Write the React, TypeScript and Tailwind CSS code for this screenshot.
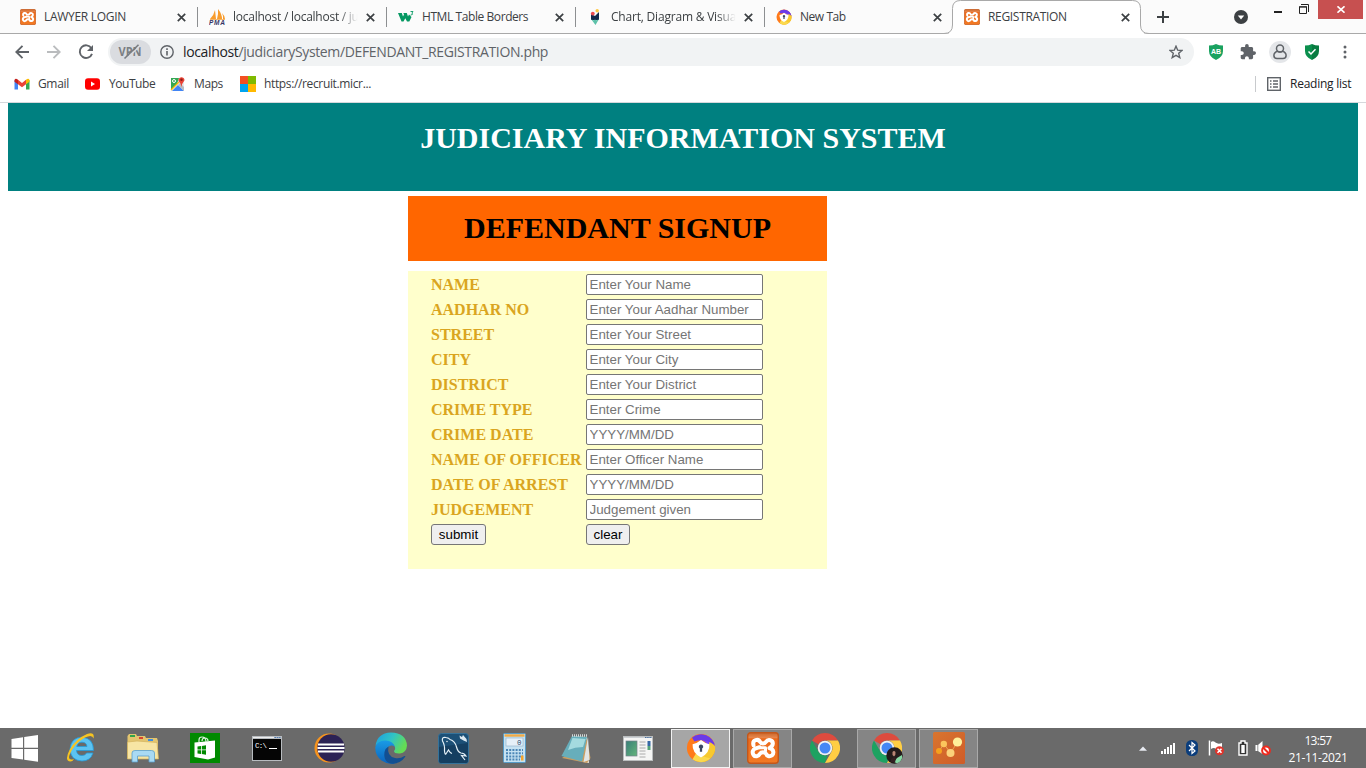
import React from "react";

const ui = "font-['Open_Sans','Noto_Sans',sans-serif]";

function XamppIcon({ size }: { size: number }) {
  return (
    <svg width={size} height={size} viewBox="0 0 32 32" className="shrink-0">
      <defs>
        <linearGradient id="xg" x1="0" y1="0" x2="0" y2="1">
          <stop offset="0" stopColor="#c9682c" />
          <stop offset="0.16" stopColor="#e8854a" />
          <stop offset="0.2" stopColor="#ec6a1c" />
          <stop offset="1" stopColor="#f27a24" />
        </linearGradient>
      </defs>
      <rect x="0.7" y="0.7" width="30.6" height="30.6" rx="3" fill="url(#xg)" stroke="#c4571a" strokeWidth="1.4" />
      <g fill="none" stroke="#fff" strokeWidth="4" strokeLinecap="round" strokeLinejoin="round">
        <path d="M6.500 13.200C5 7.200 11.500 6.800 13 9.800C14.200 12 17.800 12 19 9.800C21 6.800 26.200 8 25.800 11.800C25.600 14 24.500 15 22.500 16C27.200 17.500 27 21.500 25 23.400C22.500 25 19.700 24 19 21.700C17.800 19.800 14.200 19.800 13 21.700C11.500 24.800 8 25 6.600 23C4.800 20.400 5.600 17.400 8.800 16.400L12.500 15.200" />
        <path d="M12.500 15.700H18.500V19" strokeWidth="3" />
      </g>
    </svg>
  );
}

function SecureIcon({ size }: { size: number }) {
  return (
    <svg width={size} height={size} viewBox="0 0 32 32" className="shrink-0">
      <circle cx="16" cy="16" r="15" fill="#ff7a1a" />
      <path d="M6.500 5A15 15 0 0 1 30.800 14L27 19C25 11 17 6 6.500 5Z" fill="#7b46f3" />
      <path d="M30.800 13A15 15 0 0 1 7 28C17 27 24 22 25 9C28 10 30 11 30.800 13Z" fill="#f7c92e" />
      <path d="M7 28A15 15 0 0 0 26 27C21 26 15 24 11 21Z" fill="#fbd94d" />
      <path d="M6.500 5A15 15 0 0 1 30.800 14C27 9 18 6 9 9Z" fill="#6a3be8" />
      <path d="M7 12Q12 11 16 7.500Q20 11 25 12Q25.500 21.500 16 26Q6.500 21.500 7 12Z" fill="#fff" />
      <path d="M16 12.200a2.300 2.300 0 0 1 1.200 4.300V20h-2.400v-3.500A2.300 2.300 0 0 1 16 12.200Z" fill="#3b4762" />
    </svg>
  );
}

function ChromeIcon({ size = 30 }: { size?: number }) {
  return (
    <svg width={size} height={size} viewBox="0 0 48 48" className="shrink-0">
      <path d="M24 0A24 24 0 0 1 44.800 12H24A12 12 0 0 0 13.600 18L3.200 12A24 24 0 0 1 24 0Z" fill="#dd4b3e" />
      <path d="M3.200 12L13.600 30A12 12 0 0 0 28 35.300L24 48A24 24 0 0 1 3.200 12Z" fill="#1da261" />
      <path d="M44.800 12A24 24 0 0 1 24 48L34.400 30A12 12 0 0 0 24 12Z" fill="#ffce44" />
      <circle cx="24" cy="24" r="11.600" fill="#f1f1f1" />
      <circle cx="24" cy="24" r="8.800" fill="#4587f4" />
    </svg>
  );
}

function PmaIcon() {
  return (
    <svg width="18" height="17" viewBox="0 0 18 17" className="-mr-[2px] shrink-0">
      <path d="M6 1L7 10H1Q5 6 6 1ZM9 0Q13 5 13 10H8Q9.500 5 9 0ZM13 4Q16 7 16 10H14Q14.500 7 13 4Z" fill="#f89c2c" />
      <path d="M1 10.500H16" stroke="#f5b566" />
      <text x="0" y="16.300" fontSize="6.500" fontWeight="bold" fontStyle="italic" fontFamily="Liberation Sans" fill="#353564" textLength="16">PMA</text>
    </svg>
  );
}

function W3Icon() {
  return (
    <svg width="16" height="16" viewBox="0 0 16 16" className="shrink-0">
      <path d="M0 4H3.800L5 7.500L6 5.500L5.300 4H8.800L10 7.500L11 5.500L13.500 8L11.300 12.500H9L7.300 9.300L5.500 12.500H3.500Z" fill="#059862" />
      <path d="M12.500 2.500h2.500l-1 1.500q1.800 1.600-1.500 2.200" fill="none" stroke="#059862" strokeWidth="0.900" />
    </svg>
  );
}

function ChartIcon() {
  return (
    <svg width="16" height="16" viewBox="0 0 16 16" className="shrink-0">
      <path d="M4 5L8 7L12 3V11H4Z" fill="#13294b" />
      <path d="M4 10Q6 12 8 10.500Q10 12 12 10L8.500 16Z" fill="#5dc1a9" />
      <circle cx="10.200" cy="1.800" r="1.700" fill="#ffc845" />
      <circle cx="5.800" cy="4.600" r="1.900" fill="#ee4a4f" />
    </svg>
  );
}

function CloseIcon() {
  return (
    <svg width="9" height="9" viewBox="0 0 9 9" className="shrink-0">
      <path d="M0.800 0.800L8.200 8.200M8.200 0.800L0.800 8.200" stroke="#3c4043" strokeWidth="1.700" />
    </svg>
  );
}

type TabProps = { icon: React.ReactNode; title: string; tracking: string; last?: boolean; fade?: boolean };

function Tab({ icon, title, tracking, last, fade }: TabProps) {
  return (
    <div className="flex h-[34px] w-[189px] shrink-0 items-center pl-[11px]">
      {icon}
      <span
        className={`ml-2 w-[126px] text-[12px] leading-4 whitespace-nowrap text-[#3c4043] ${tracking} ${
          fade ? "[mask-image:linear-gradient(to_right,black_84%,transparent_99%)]" : ""
        }`}
      >
        {title}
      </span>
      <div className="ml-[7px] flex h-full flex-1 items-center justify-between">
        <CloseIcon />
        {!last && <i className="h-5 w-px bg-[#8d8f91]" />}
      </div>
    </div>
  );
}

function TabStrip() {
  return (
    <div className="flex h-[34px] items-stretch border-b border-[#a9a9a9] bg-[#fbfbfb]">
      <div className="flex pl-[9px]">
        <Tab icon={<XamppIcon size={16} />} title="LAWYER LOGIN" tracking="tracking-[-0.3px]" />
        <Tab icon={<PmaIcon />} title="localhost / localhost / ju" tracking="tracking-[-0.25px]" fade />
        <Tab icon={<W3Icon />} title="HTML Table Borders" tracking="tracking-[-0.42px]" />
        <Tab icon={<ChartIcon />} title="Chart, Diagram & Visua" tracking="tracking-[-0.2px]" fade />
        <Tab icon={<SecureIcon size={16} />} title="New Tab" tracking="tracking-[-0.45px]" last />
      </div>
      <div className="relative flex h-[34px] w-[188px] items-center">
        <svg className="absolute top-0 -left-[11px]" width="207" height="34" viewBox="0 0 207 34">
          <path
            d="M0 33.500H1Q9.500 33.500 9.500 25V8.500Q9.500 0.500 17.500 0.500H189.500Q197.500 0.500 197.500 8.500V25Q197.500 33.500 206 33.500H207"
            fill="#fff"
            stroke="#a9a9a9"
          />
          <path d="M6 33.500H201" stroke="#fff" strokeWidth="1.200" />
        </svg>
        <div className="relative flex w-full items-center pl-[10px]">
          <XamppIcon size={16} />
          <span className="ml-2 w-[126px] text-[12px] leading-4 tracking-[-0.32px] text-[#3c4043]">REGISTRATION</span>
          <div className="ml-[7px]">
            <CloseIcon />
          </div>
        </div>
      </div>
      <div className="flex flex-1 items-center justify-between pl-[15px]">
        <svg width="12" height="12" viewBox="0 0 12 12">
          <path d="M6 0V12M0 6H12" stroke="#3c4043" strokeWidth="2" />
        </svg>
        <div className="flex h-full items-start">
          <svg width="14" height="14" viewBox="0 0 14 14" className="mt-[10px] mr-[26px]">
            <circle cx="7" cy="7" r="7" fill="#3c4043" />
            <path d="M3.800 5.500H10.200L7 9.500Z" fill="#fff" />
          </svg>
          <i className="mt-[11px] mr-[17px] h-[2px] w-2 bg-[#222]" />
          <svg width="10" height="10" viewBox="0 0 10 10" className="mt-1 mr-[9px]">
            <path d="M0.500 3H7.500V9.500H0.500ZM0 2.800H8M2 0.500H9.500V8" fill="none" stroke="#222" />
          </svg>
          <div className="mr-[3px] flex h-[19px] w-[45px] items-center justify-center bg-[#c75050]">
            <svg width="8" height="7" viewBox="0 0 8 7">
              <path d="M0.500 0.300L7.500 6.700M7.500 0.300L0.500 6.700" stroke="#fff" strokeWidth="1.600" />
            </svg>
          </div>
        </div>
      </div>
    </div>
  );
}

function Toolbar() {
  return (
    <div className="flex h-[36px] items-center bg-white pl-[15px]">
      <svg width="14" height="14" viewBox="0 0 14 14">
        <path d="M14 7H1.500M7.500 0.800L1.300 7L7.500 13.200" fill="none" stroke="#5f6368" strokeWidth="1.900" />
      </svg>
      <svg width="14" height="14" viewBox="0 0 14 14" className="ml-[18px]">
        <path d="M0 7H12.500M6.500 0.800L12.700 7L6.500 13.200" fill="none" stroke="#babcbe" strokeWidth="1.900" />
      </svg>
      <svg width="16" height="16" viewBox="0 0 16 16" className="ml-[17px]">
        <path d="M13.400 4.200A6.300 6.300 0 1 0 14 9.800" fill="none" stroke="#5f6368" strokeWidth="1.900" />
        <path d="M15 1V7H9Z" fill="#5f6368" />
      </svg>
      <div className="ml-[14px] flex h-7 w-[1086px] items-center rounded-full bg-[#f1f3f4] pl-[2px]">
        <div className="flex h-6 w-[41px] items-center justify-center rounded-full bg-[#dadce0]">
          <svg width="25" height="16" viewBox="0 0 25 16">
            <text x="0.500" y="12" fontSize="12" fontWeight="bold" fontFamily="Open Sans" fill="#7b7f84" textLength="23" lengthAdjust="spacingAndGlyphs">VPN</text>
            <path d="M7.500 16L21.500 2.300" stroke="#dadce0" strokeWidth="1.600" />
            <path d="M6.500 14.500L20.500 0.800" stroke="#777b80" strokeWidth="1.600" />
          </svg>
        </div>
        <svg width="14" height="14" viewBox="0 0 14 14" className="ml-[9px]">
          <circle cx="7" cy="7" r="6.200" fill="none" stroke="#5f6368" strokeWidth="1.400" />
          <path d="M7 6V10.500M7 3.300V4.900" stroke="#5f6368" strokeWidth="1.600" />
        </svg>
        <span className="ml-[9px] text-[14px] leading-5 tracking-[-0.36px] whitespace-nowrap text-[#5f6368]">
          <b className="font-normal text-[#202124]">localhost</b>/judiciarySystem/DEFENDANT_REGISTRATION.php
        </span>
        <svg width="14" height="14" viewBox="0 0 14 14" className="mr-[11px] ml-auto">
          <path d="M7 1.200L8.700 5.200L13 5.500L9.700 8.300L10.800 12.600L7 10.300L3.200 12.600L4.300 8.300L1 5.500L5.300 5.200Z" fill="none" stroke="#5f6368" strokeWidth="1.400" />
        </svg>
      </div>
      <svg width="14" height="16" viewBox="0 0 14 16" className="ml-[15px]">
        <path d="M0 1.500Q4 1.500 7 0Q10 1.500 14 1.500V7Q14 13 7 16Q0 13 0 7Z" fill="#1aa260" />
        <text x="2" y="9.800" fontSize="7" fontWeight="bold" fontFamily="Liberation Sans" fill="#fff" textLength="10">AB</text>
      </svg>
      <svg width="16" height="16" viewBox="1 1 22 22" className="ml-[17px]">
        <path d="M20.500 11H19V7c0-1.100-.9-2-2-2h-4V3.500a2.500 2.500 0 0 0-5 0V5H4c-1.100 0-1.990.9-1.990 2v3.800H3.500c1.490 0 2.700 1.210 2.700 2.700s-1.210 2.700-2.700 2.700H2V20c0 1.100.9 2 2 2h3.800v-1.500c0-1.490 1.210-2.700 2.700-2.700s2.700 1.210 2.700 2.700V22H17c1.100 0 2-.9 2-2v-4h1.500a2.500 2.500 0 0 0 0-5Z" fill="#5f6368" />
      </svg>
      <div className="ml-[13px] flex size-[22px] items-center justify-center rounded-full bg-[#e4e6e9]">
        <svg width="14" height="16" viewBox="0 0 14 16">
          <circle cx="7" cy="4.400" r="3.500" fill="none" stroke="#5f6368" strokeWidth="1.500" />
          <path d="M4.500 7.300Q0.900 8.500 0.900 11.500Q0.900 14.500 4 14.500H10Q13.100 14.500 13.100 11.500Q13.100 8.500 9.500 7.300Q7 8.600 4.500 7.300Z" fill="none" stroke="#5f6368" strokeWidth="1.500" />
        </svg>
      </div>
      <svg width="14" height="16" viewBox="0 0 14 16" className="ml-[14px]">
        <path d="M0 1.500Q4 1.500 7 0V16Q0 13 0 7Z" fill="#0b8f4d" />
        <path d="M14 1.500Q10 1.500 7 0V16Q14 13 14 7Z" fill="#087c41" />
        <path d="M3.500 7.500L6 10L10.500 5.300" fill="none" stroke="#fff" strokeWidth="1.500" />
      </svg>
      <svg width="4" height="14" viewBox="0 0 4 14" className="ml-[23.500px]">
        <circle cx="2" cy="2" r="1.500" fill="#5f6368" />
        <circle cx="2" cy="7" r="1.500" fill="#5f6368" />
        <circle cx="2" cy="12" r="1.500" fill="#5f6368" />
      </svg>
    </div>
  );
}

function Bookmarks() {
  return (
    <div className="flex h-[33px] items-center border-b border-[#d5d8dc] bg-white pb-1 pl-[14px] text-[12px] leading-4 whitespace-nowrap text-[#3c4043]">
      <svg width="16" height="12" viewBox="0 0 16 12">
        <path d="M0.500 2V11.500H4V5Z" fill="#4285f4" />
        <path d="M15.500 2V11.500H12V5Z" fill="#34a853" />
        <path d="M4 1.800L8 5L12 1.800V6.300L8 9.300L4 6.300Z" fill="#ea4335" />
        <path d="M0.500 2Q1.500-0.500 4 1.800V6.300L0.500 3.800Z" fill="#c5221f" />
        <path d="M15.500 2Q14.500-0.500 12 1.800V6.300L15.500 3.800Z" fill="#fbbc04" />
      </svg>
      <span className="ml-2 w-[31px] tracking-[-0.35px]">Gmail</span>
      <svg width="15" height="12" viewBox="0 0 15 12" className="ml-[16px]">
        <rect width="15" height="11.500" y="0.300" rx="3" fill="#f00" />
        <path d="M6 3.500L10 6L6 8.500Z" fill="#fff" />
      </svg>
      <span className="ml-[9px] w-[45px] tracking-[-0.45px]">YouTube</span>
      <svg width="16" height="16" viewBox="0 0 16 16" className="ml-[16px]">
        <rect x="1" y="2" width="13" height="13" rx="1" fill="#e8eaed" />
        <path d="M1 2H9L7 8L1 14Z" fill="#34a853" />
        <path d="M2 15L8 9L14 15Z" fill="#4285f4" />
        <path d="M8 9L10 7L14 11V15Z" fill="#b8bcc2" />
        <path d="M1 14L9 6" stroke="#fbbc04" strokeWidth="1.200" />
        <circle cx="4" cy="5" r="1.500" fill="none" stroke="#fff" />
        <path d="M11.500 11Q11 7.500 8.600 5A3 3 0 1 1 14.500 4.300Q12 7.500 11.500 11Z" fill="#ea4335" />
        <circle cx="11.500" cy="3.800" r="1.200" fill="#8c1d18" />
      </svg>
      <span className="ml-2 w-[29px] tracking-[-0.4px]">Maps</span>
      <div className="ml-[17px] grid size-4 grid-cols-2">
        <i className="bg-[#f25022]" />
        <i className="bg-[#7fba00]" />
        <i className="bg-[#00a4ef]" />
        <i className="bg-[#ffb900]" />
      </div>
      <span className="ml-2 tracking-[-0.36px]">https://recruit.micr...</span>
      <i className="ml-auto h-4 w-px bg-[#c8cacd]" />
      <svg width="14" height="14" viewBox="0 0 14 14" className="ml-[11px]">
        <rect x="0.700" y="0.700" width="12.600" height="12.600" fill="none" stroke="#5f6368" strokeWidth="1.400" />
        <path d="M3 4H4.500M3 7H4.500M3 10H4.500M6 4H11M6 7H11M6 10H11" stroke="#5f6368" strokeWidth="1.300" />
      </svg>
      <span className="mr-[14px] ml-[9px] w-[62px] tracking-[-0.24px] text-[#202124]">Reading list</span>
    </div>
  );
}

const fields = [
  ["NAME", "Enter Your Name"],
  ["AADHAR NO", "Enter Your Aadhar Number"],
  ["STREET", "Enter Your Street"],
  ["CITY", "Enter Your City"],
  ["DISTRICT", "Enter Your District"],
  ["CRIME TYPE", "Enter Crime"],
  ["CRIME DATE", "YYYY/MM/DD"],
  ["NAME OF OFFICER", "Enter Officer Name"],
  ["DATE OF ARREST", "YYYY/MM/DD"],
  ["JUDGEMENT", "Judgement given"],
];

const button =
  "h-[21px] rounded-[3px] border border-[#767676] bg-[#efefef] text-center font-['Liberation_Sans',sans-serif] text-[13.333px] leading-[17px] text-black";

function Page() {
  return (
    <main className="flex-1 bg-white px-2 font-['Liberation_Serif',serif]">
      <header className="flex h-[88px] justify-center bg-[#008080] pt-4">
        <h1 className="text-[30px] leading-[37px] font-bold whitespace-nowrap text-white">JUDICIARY INFORMATION SYSTEM</h1>
      </header>
      <div className="mt-[5px] ml-[400px] w-[419px]">
        <div className="flex h-[65px] justify-center bg-[#ff6600] pt-[13px]">
          <h1 className="text-[30px] leading-[37px] font-bold whitespace-nowrap text-black">DEFENDANT SIGNUP</h1>
        </div>
        <form className="mt-[10px] flex h-[298px] flex-col gap-1 bg-[#ffffcc] pt-[3px] pl-[23px]" onSubmit={(e) => e.preventDefault()}>
          {fields.map(([label, hint]) => (
            <label key={label} className="flex h-[21px] items-center">
              <span className="w-[155px] text-[16px] leading-[18px] font-bold whitespace-nowrap text-[#daa520]">{label}</span>
              <input
                placeholder={hint}
                className="h-[21px] w-[177px] rounded-[2px] border border-[#767676] bg-white pr-[2px] pl-[2.500px] font-['Liberation_Sans',sans-serif] text-[13.333px] placeholder:text-[#757575]"
              />
            </label>
          ))}
          <div className="flex">
            <div className="flex w-[155px]">
              <button type="submit" className={`w-[55px] ${button}`}>submit</button>
            </div>
            <button type="reset" className={`w-[44px] ${button}`}>clear</button>
          </div>
        </form>
      </div>
    </main>
  );
}

function WindowsIcon() {
  return (
    <svg width="28" height="27" viewBox="0 0 28 27">
      <path d="M0.500 4L12 2.300V12.800H0.500ZM13.200 2.100L27 0V12.800H13.200ZM0.500 14H12V24.500L0.500 23ZM13.200 14H27V26.700L13.200 24.700Z" fill="#fff" />
    </svg>
  );
}

function IeIcon() {
  return (
    <svg width="32" height="32" viewBox="0 0 32 32">
      <path d="M28.500 18.500H11.500Q12 23.500 17 23.500Q20.300 23.500 21.600 21H28Q25.500 29 17 29Q5.500 28.500 5 17Q6 5.500 17 5.200Q28.500 6 28.500 18.500ZM11.800 14.500H22Q21.500 10.300 17 10.200Q12.500 10.300 11.800 14.500Z" fill="#5cc3f2" stroke="#259bd8" strokeWidth="0.800" />
      <path d="M5.500 29.500Q-1 29 4.500 18Q11 6.500 22 2Q30-0.500 28.500 6.500Q27.500 2 20 5.500Q9 11.500 4.500 23Q2.500 29 9 27Q7.500 29.500 5.500 29.500Z" fill="#f7c421" />
    </svg>
  );
}

function ExplorerIcon() {
  return (
    <svg width="32" height="30" viewBox="0 0 32 30">
      <path d="M0.500 3L2 1H9L10 3H18L19 5H30L31 8V26H0.500Z" fill="#e3c56f" />
      <path d="M3 2H8V4H3Z" fill="#31a54a" />
      <path d="M12 4H16V6H12Z" fill="#d8452e" />
      <path d="M21 6H26V8H21Z" fill="#3f8ee0" />
      <path d="M0.500 9L10 8L30 9.500L31.500 26H0.500Z" fill="#f7e5a4" stroke="#d2b25b" strokeWidth="0.700" />
      <path d="M5 29V20Q5 17.500 8 17.500H24.500Q27.500 17.500 27.500 20V29H22V23H10.500V29Z" fill="#a9daf3" stroke="#5b9fcc" strokeWidth="0.800" />
    </svg>
  );
}

function StoreIcon() {
  return (
    <svg width="30" height="30" viewBox="0 0 30 30">
      <rect width="30" height="30" fill="#008a00" />
      <path d="M4.500 9.500L25 7.500V24.500L18 26.500L4.500 24Z" fill="#fff" />
      <path d="M9 9V7Q9 4 12 4Q16 4 16 9M12 8Q12 5 15 5Q18 5 18 8" fill="none" stroke="#d9f0d9" strokeWidth="1.200" />
      <path d="M7.500 13.500L11 13V16.500H7.500ZM11.800 12.900L16 12.300V16.500H11.800ZM7.500 17.300H11V21L7.500 20.500ZM11.800 17.300H16V21.700L11.800 21Z" fill="#008a00" />
    </svg>
  );
}

function CmdIcon() {
  return (
    <svg width="30" height="25" viewBox="0 0 30 25">
      <rect width="30" height="25" fill="#b8bcc0" />
      <rect x="1" y="3" width="28" height="21" fill="#050505" />
      <path d="M1 1.500H22" stroke="#eee" />
      <path d="M22.500 1.500H28.500" stroke="#507bb5" strokeDasharray="1.500 0.800" />
      <text x="3" y="11.500" fontSize="7.500" fontFamily="Liberation Mono" fill="#fff" textLength="12">C:\</text>
      <path d="M17 12.500H25" stroke="#fff" />
    </svg>
  );
}

function EclipseIcon() {
  return (
    <svg width="31" height="30" viewBox="0 0 31 30">
      <circle cx="15" cy="15" r="14.500" fill="#f7941e" />
      <circle cx="17" cy="15" r="13.700" fill="#2c2255" />
      <path d="M4 11.500H30M3.500 15H30.500M4 18.500H30" stroke="#fff" strokeWidth="1.800" />
    </svg>
  );
}

function EdgeIcon() {
  return (
    <svg width="32" height="32" viewBox="0 0 32 32">
      <defs>
        <linearGradient id="eg" x1="0" y1="0" x2="1" y2="0.400">
          <stop offset="0" stopColor="#1b9de2" />
          <stop offset="0.550" stopColor="#31c4c4" />
          <stop offset="1" stopColor="#64dd55" />
        </linearGradient>
        <linearGradient id="eb" x1="0" y1="0" x2="0" y2="1">
          <stop offset="0" stopColor="#1a9be5" />
          <stop offset="1" stopColor="#0b62bb" />
        </linearGradient>
      </defs>
      <path d="M0.500 14Q2 1 16 0.500Q31 1 32 13.500Q31.500 20.500 25 21.500Q19 21.800 19 19Q21 17 19.500 14Q17 10.500 11 10Q3 10 0.500 14Z" fill="url(#eg)" />
      <path d="M0.300 15Q2.500 8.300 10.500 8.500Q18 8.800 20 15Q17.500 12.800 14.500 14Q10.500 16 11.500 22Q13 29.500 20 31.400Q13 33 6.500 28.500Q0 23.500 0.300 15Z" fill="url(#eb)" />
      <path d="M13.500 14.500Q11.500 24 20 26Q25.500 26.800 29.500 24Q31 23.500 30 25Q26 31 18 31.800Q8 31 9.500 20Q10.500 16 13.500 14.500Z" fill="#134f91" />
    </svg>
  );
}

function MysqlIcon() {
  return (
    <svg width="31" height="31" viewBox="0 0 31 31">
      <rect x="0.500" y="0.500" width="30" height="30" rx="3" fill="#1c5077" stroke="#35739b" />
      <path d="M1 14L30 10V28Q30 30 28 30H3Q1 30 1 28Z" fill="#153f61" />
      <path d="M8.500 20Q7 23 6.500 18Q7 12 4.500 8Q3.500 3.500 8 4.500Q11 5 12 6.500Q17 8 18.500 14Q20 19.500 23 20Q26 20 28 23L23.500 22.500L27 27" fill="none" stroke="#e5f1f8" strokeWidth="1.200" />
      <path d="M8.500 20L10.500 17Q12 20 14 20.500" fill="none" stroke="#e5f1f8" strokeWidth="1.200" />
      <path d="M21.500 2.500L24 4L25 2L28.500 6L29 9L25.500 7.500L22 5.500Z" fill="#dce9f1" />
      <circle cx="9" cy="8.500" r="0.700" fill="#fff" />
    </svg>
  );
}

function CalcIcon() {
  return (
    <svg width="23" height="30" viewBox="0 0 23 30" className="mr-[2px]">
      <rect x="0.500" y="0.500" width="22" height="29" rx="1" fill="#c6e2f2" stroke="#569bc8" />
      <path d="M1.500 2.500H21.500" stroke="#f0aa45" strokeWidth="2.400" />
      <rect x="3" y="5" width="17" height="8" fill="#e6f0f8" stroke="#8caec7" strokeWidth="0.600" />
      <text x="14" y="12" fontSize="7.500" fontFamily="Liberation Mono" fill="#26476f">0</text>
      <g stroke="#4b86b6" strokeWidth="2" strokeDasharray="2 1.200">
        <path d="M3 17H20M3 20.200H20M3 23.400H20M3 26.600H17" />
      </g>
      <rect x="18" y="22.500" width="2.500" height="5" fill="#f6a52b" />
    </svg>
  );
}

function NotepadIcon() {
  return (
    <svg width="32" height="31" viewBox="0 0 32 31" className="mr-[2px]">
      <path d="M13 3L27 4L29 30L23 29Z" fill="#ece6d8" />
      <path d="M27 6L30.500 25L27 30L2 25L5 23Z" fill="#c99d61" />
      <path d="M28 4L29.500 27L23.500 29Z" fill="#e2e5e4" />
      <path d="M12 3L27 4L22 28.500L1.500 23Z" fill="#67aebb" />
      <path d="M12.500 5L25.500 6L23 14Q15 14 8 17Z" fill="#a5dbdf" />
      <path d="M12 2.500H28" stroke="#d3d9d9" strokeWidth="2.500" strokeDasharray="1 1" />
    </svg>
  );
}

function WindowIcon() {
  return (
    <svg width="30" height="25" viewBox="0 0 30 25" className="mr-[2px]">
      <rect x="0.500" y="0.500" width="29" height="24" fill="#f5f5f4" stroke="#babdbe" />
      <path d="M1 1.500H29" stroke="#ccd0d4" />
      <path d="M22 1.500H29" stroke="#456d9d" strokeDasharray="1.500 0.700" />
      <defs>
        <linearGradient id="wg" x1="0" y1="0" x2="1" y2="1">
          <stop stopColor="#387f78" />
          <stop offset="1" stopColor="#65b57b" />
        </linearGradient>
      </defs>
      <rect x="3" y="5" width="11" height="15" fill="url(#wg)" stroke="#77828c" strokeWidth="0.700" />
      <path d="M16.500 6H22.500M16.500 9H22.500M16.500 12H22.500M16.500 15H22.500M16.500 18H22.500M16.500 21H22.500" stroke="#aaa" />
      <rect x="24.500" y="5" width="3" height="5" fill="#3568a5" />
      <rect x="24.500" y="10" width="3" height="4" fill="#54a47b" />
    </svg>
  );
}

function AvatarChrome() {
  return (
    <div className="relative flex">
      <ChromeIcon />
      <svg className="absolute top-[14px] left-[14px]" width="17" height="17" viewBox="0 0 17 17">
        <circle cx="8.500" cy="8.500" r="8.200" fill="#231b1b" />
        <path d="M11 11L16 8Q17 14 11 16.300L8 15Z" fill="#86d9a4" />
        <path d="M6.500 5Q8 3 9.500 5L9.300 8L8 9.500L6.500 8Z" fill="#b98574" />
        <path d="M5 12L8 10L10 11L9 15.500L5 15Z" fill="#332022" />
      </svg>
    </div>
  );
}

function NodesIcon() {
  return (
    <svg width="32" height="32" viewBox="0 0 32 32">
      <defs>
        <linearGradient id="ng" x1="0" y1="0" x2="1" y2="1">
          <stop stopColor="#d8752f" />
          <stop offset="1" stopColor="#cf5c28" />
        </linearGradient>
      </defs>
      <rect width="32" height="32" rx="1.500" fill="url(#ng)" />
      <path d="M6 19L11 12L17.500 21L24.500 10" fill="none" stroke="#eda64f" />
      <circle cx="6" cy="19" r="3" fill="#f4a11f" />
      <circle cx="10.800" cy="12" r="3.200" fill="#fbc55c" />
      <circle cx="17.500" cy="21" r="4" fill="#fbd27a" />
      <circle cx="24.500" cy="10" r="4.600" fill="#fff09a" />
    </svg>
  );
}

function Open({ children, active }: { children: React.ReactNode; active?: boolean }) {
  return (
    <div
      className={`mr-px flex h-[39px] w-[59px] items-center justify-center border ${
        active ? "border-[#f2f2f2] bg-[#a6a6a6]" : "border-[#a9a9a9] bg-[#858585]"
      }`}
    >
      {children}
    </div>
  );
}

function Tray() {
  return (
    <div className="ml-auto flex h-full items-center text-white">
      <svg width="8" height="5" viewBox="0 0 8 5">
        <path d="M0 4.800L4 0.500L8 4.800Z" fill="#e8ebf2" />
      </svg>
      <svg width="16" height="12" viewBox="0 0 16 12" className="ml-[13px]">
        <g fill="#fff">
          <rect x="1" y="9" width="2" height="3" />
          <rect x="4" y="7" width="2" height="5" />
          <rect x="7" y="5" width="2" height="7" />
          <rect x="10" y="3" width="2" height="9" />
          <rect x="13" y="1" width="2" height="11" />
        </g>
      </svg>
      <svg width="12" height="16" viewBox="0 0 12 16" className="ml-[10px]">
        <rect width="12" height="16" rx="5.500" fill="#0a3d7c" />
        <path d="M3 5L9 11L6 13.500V2.500L9 5L3 11" fill="none" stroke="#fff" strokeWidth="1.200" />
      </svg>
      <svg width="17" height="16" viewBox="0 0 17 16" className="ml-[10px]">
        <path d="M1.500 0.500V15.500" stroke="#fff" strokeWidth="1.500" />
        <path d="M3 2Q5 0.500 7.500 2.500T14 3V9Q10 11 8 9T3 9Z" fill="#fff" />
        <circle cx="11.500" cy="10.800" r="4.500" fill="#e0332a" />
        <path d="M9.500 8.800L13.500 12.800M13.500 8.800L9.500 12.800" stroke="#fff" strokeWidth="1.600" />
      </svg>
      <svg width="10" height="16" viewBox="0 0 10 16" className="ml-[13px]">
        <path d="M3 1H7V3H9V15H1V3H3Z" fill="#333" stroke="#fff" strokeWidth="1.400" />
        <path d="M3.300 5H6.700V13H3.300Z" fill="#fff" />
      </svg>
      <svg width="17" height="15" viewBox="0 0 17 15" className="ml-[7px]">
        <path d="M0.500 4H3L7.500 0V13L3 10H0.500Z" fill="#fff" />
        <path d="M2.800 4V10" stroke="#666" strokeWidth="0.700" />
        <circle cx="11" cy="9.500" r="3.900" fill="#fff" stroke="#ee2a1e" strokeWidth="2" />
        <path d="M8.300 6.800L13.700 12.200" stroke="#ee2a1e" strokeWidth="2" />
      </svg>
      <div className="mr-[18px] ml-[16px] flex w-[60px] flex-col items-center pt-px text-[12px] leading-[17px] whitespace-nowrap">
        <span className="tracking-[-0.7px]">13:57</span>
        <span className="tracking-[-0.36px]">21-11-2021</span>
      </div>
    </div>
  );
}

function Taskbar() {
  const items = [
    <IeIcon />, <ExplorerIcon />, <StoreIcon />, <CmdIcon />, <EclipseIcon />, <EdgeIcon />,
    <MysqlIcon />, <CalcIcon />, <NotepadIcon />, <WindowIcon />,
    <Open active><SecureIcon size={30} /></Open>,
    <Open><XamppIcon size={32} /></Open>,
    <ChromeIcon />,
    <Open><AvatarChrome /></Open>,
    <Open><NodesIcon /></Open>,
  ];
  return (
    <footer className="flex h-10 items-center bg-[#6a6a6a]">
      <div className="flex w-[50px] justify-center">
        <WindowsIcon />
      </div>
      {items.map((item, i) => (
        <div key={i} className="flex w-[62px] shrink-0 items-center justify-center">
          {item}
        </div>
      ))}
      <Tray />
    </footer>
  );
}

export default function App() {
  return (
    <div className={`flex h-[768px] w-[1366px] flex-col overflow-hidden bg-white ${ui}`}>
      <TabStrip />
      <Toolbar />
      <Bookmarks />
      <Page />
      <Taskbar />
    </div>
  );
}
